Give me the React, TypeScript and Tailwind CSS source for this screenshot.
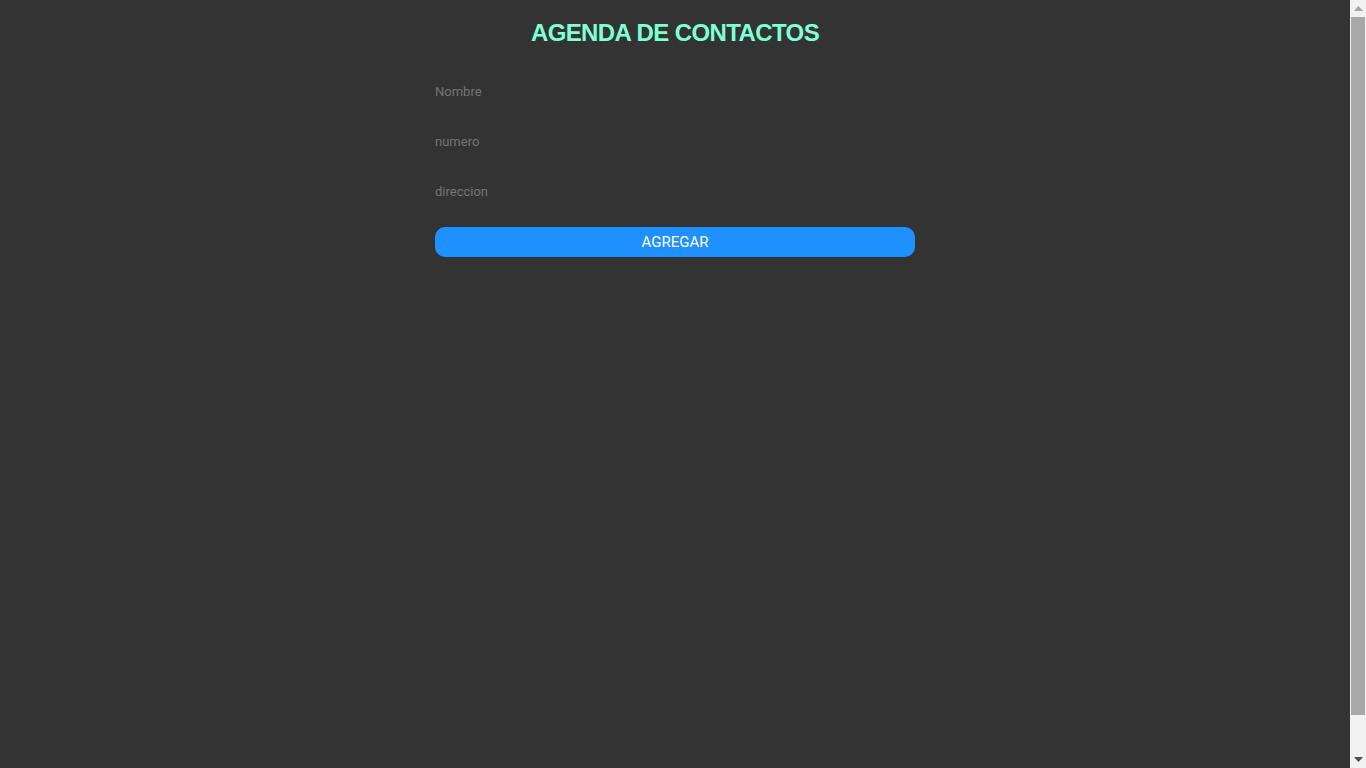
const fields = ['Nombre', 'numero', 'direccion'];

const Scrollbar = () => (
  <div className="flex h-screen w-4 shrink-0 flex-col bg-[#f1f1f1]">
    <div className="flex h-[17px] items-center justify-center">
      <svg width="9" height="5" viewBox="0 0 9 5">
        <path d="M4.5 0 L9 5 L0 5 Z" fill="#a3a3a3" />
      </svg>
    </div>
    <div className="mx-px h-[698px] bg-[#a8a8a8]" />
    <div className="flex-1" />
    <div className="flex h-[17px] items-center justify-center">
      <svg width="9" height="5" viewBox="0 0 9 5">
        <path d="M0 0 L9 0 L4.5 5 Z" fill="#505050" />
      </svg>
    </div>
  </div>
);

const App = () => {
  return (
    <div className="flex h-screen w-full overflow-hidden bg-[#333333]">
      <div className="flex-1 pt-[19px]">
        <h1 className="text-center text-[24px] leading-[28px] font-bold tracking-[-0.6px] text-[#7fffd4] font-['Liberation_Sans',Arial,sans-serif]">
          AGENDA DE CONTACTOS
        </h1>
        <form className="mx-auto mt-[29px] flex w-[480px] flex-col" onSubmit={(e) => e.preventDefault()}>
          {fields.map((f) => (
            <input
              key={f}
              type="text"
              placeholder={f}
              className="mb-5 h-[30px] w-full bg-transparent text-[13px] text-[#ddd] outline-none placeholder:text-[#757575] font-['Roboto',sans-serif]"
            />
          ))}
          <button
            type="submit"
            className="mt-px h-[30px] w-full rounded-[10px] bg-[#1e90ff] text-[15px] text-white font-['Roboto',sans-serif]"
          >
            AGREGAR
          </button>
        </form>
      </div>
      <Scrollbar />
    </div>
  );
};

export default App;
